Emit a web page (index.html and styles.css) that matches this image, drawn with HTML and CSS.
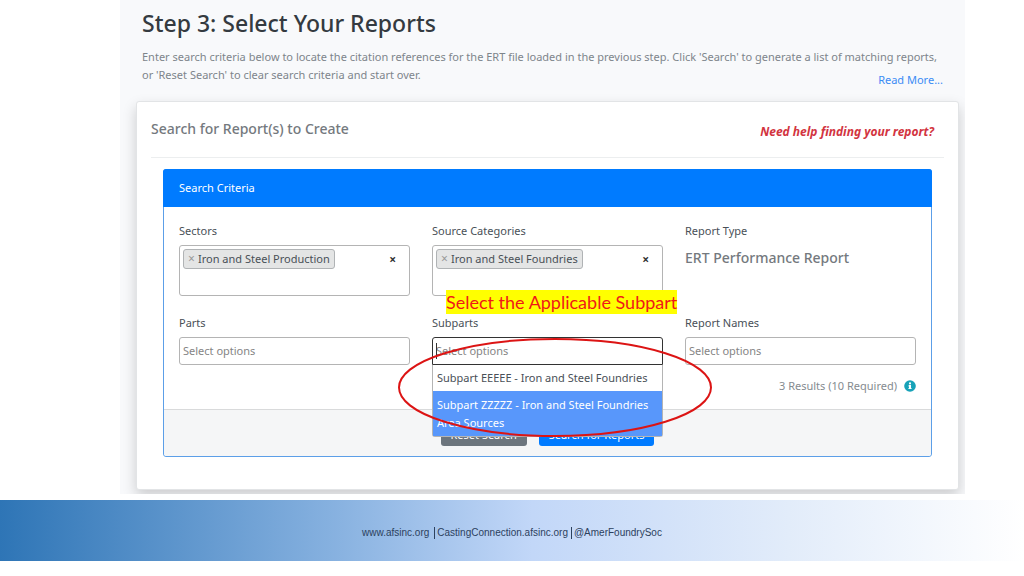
FILE: index.html
```html
<!DOCTYPE html>
<html lang="en">
<head>
<meta charset="utf-8">
<meta name="viewport" content="width=device-width, initial-scale=1">
<title>Step 3: Select Your Reports</title>
<link rel="stylesheet" href="styles.css">
</head>
<body>
<main class="screen">
  <header class="intro">
    <h1 class="title">Step 3: Select Your Reports</h1>
    <p class="lead">Enter search criteria below to locate the citation references for the ERT file loaded in the previous step. Click 'Search' to generate a list of matching reports, or 'Reset Search' to clear search criteria and start over.</p>
    <a class="more" href="#more">Read More...</a>
  </header>
  <section class="card">
    <div class="card-head">
      <h2 class="card-title">Search for Report(s) to Create</h2>
      <a class="help" href="#help">Need help finding your report?</a>
    </div>
    <form class="panel">
      <h3 class="panel-head">Search Criteria</h3>
      <div class="fields">
        <div class="field">
          <label class="label" for="sectors">Sectors</label>
          <div class="multi">
            <span class="tag"><button class="remove" type="button" aria-label="Remove Iron and Steel Production">×</button>Iron and Steel Production</span>
            <input class="entry" id="sectors" type="text">
            <button class="clear" type="button" aria-label="Clear sectors">×</button>
          </div>
        </div>
        <div class="field">
          <label class="label" for="categories">Source Categories</label>
          <div class="multi">
            <span class="tag"><button class="remove" type="button" aria-label="Remove Iron and Steel Foundries">×</button>Iron and Steel Foundries</span>
            <input class="entry" id="categories" type="text">
            <button class="clear" type="button" aria-label="Clear source categories">×</button>
          </div>
        </div>
        <div class="field">
          <span class="label">Report Type</span>
          <strong class="type">ERT Performance Report</strong>
        </div>
        <div class="field">
          <label class="label" for="parts">Parts</label>
          <input class="text" id="parts" type="text" placeholder="Select options">
        </div>
        <div class="field">
          <label class="label" for="subparts">Subparts</label>
          <div class="combo">
            <input class="text active" id="subparts" type="text" placeholder="Select options">
            <span class="caret"></span>
            <ul class="menu" role="listbox" aria-label="Subparts">
              <li class="option" role="option">Subpart EEEEE - Iron and Steel Foundries</li>
              <li class="option selected" role="option" aria-selected="true">Subpart ZZZZZ - Iron and Steel Foundries Area Sources</li>
            </ul>
            <svg class="ring" viewBox="0 0 314 99" preserveAspectRatio="none" aria-hidden="true"><ellipse cx="157" cy="49.5" rx="156" ry="48.5" fill="none" stroke="#dc1414" stroke-width="2"/></svg>
            <span class="callout">Select the Applicable Subpart</span>
          </div>
        </div>
        <div class="field">
          <label class="label" for="names">Report Names</label>
          <input class="text" id="names" type="text" placeholder="Select options">
        </div>
      </div>
      <p class="results">3 Results (10 Required)
        <svg class="info" viewBox="0 0 512 512" aria-hidden="true"><circle cx="256" cy="256" r="248" fill="#17a2b8"/><circle cx="256" cy="144" r="46" fill="#fff"/><path fill="#fff" d="M204 216h84q12 0 12 12v112h12q12 0 12 12v24q0 12-12 12H200q-12 0-12-12v-24q0-12 12-12h12v-64h-8q-12 0-12-12v-24q0-12 12-12z"/></svg>
      </p>
      <div class="actions">
        <button class="btn reset" type="reset">Reset Search</button>
        <button class="btn search" type="button">Search for Reports</button>
      </div>
    </form>
  </section>
</main>
<footer class="footer">
  <a href="#site">www.afsinc.org</a>
  <a class="divided wide" href="#connection">CastingConnection.afsinc.org</a>
  <a class="divided" href="#social">@AmerFoundrySoc</a>
</footer>
</body>
</html>
```
FILE: styles.css
```css
* { box-sizing: border-box; }
body {
  margin: 0;
  background: #fff;
  color: #495057;
  font-family: "Noto Sans", "Open Sans", sans-serif;
  font-size: 11px;
  line-height: 18px;
}
h1, h2, h3, p, ul { margin: 0; padding: 0; }
a { text-decoration: none; }
button, input { font: inherit; }
.screen {
  margin: 0 59px 0 120px;
  padding: 8px 6px 4px 16px;
  overflow: hidden;
  background: #f8f9fb;
}
.intro {
  display: grid;
  grid-template-columns: 1fr auto;
  grid-template-rows: 30px 10px 23px 30px;
  padding: 0 11px 0 6px;
}
.title { grid-area: 1 / 1 / 2 / 3; color: #343a40; font-size: 23px; line-height: 30px; font-weight: 500; }
.lead { grid-area: 3 / 1 / 5 / 3; color: #7e858b; }
.more { grid-area: 4 / 2; padding-right: 5px; color: #3b8cf5; }
.card {
  padding: 0 14px 32px;
  border: 1px solid #e2e4e6;
  border-radius: 3px;
  background: #fff;
  box-shadow: 0 6px 14px rgba(0, 0, 0, .18);
}
.card-head {
  display: flex;
  justify-content: space-between;
  align-items: center;
  height: 56px;
  padding-right: 10px;
  border-bottom: 1px solid #eceeef;
}
.card-title { padding-bottom: 2px; color: #74797e; font-size: 14px; font-weight: 500; }
.help { padding-top: 4px; color: #d2343f; font-size: 12px; font-weight: 700; font-style: italic; }
.panel {
  margin: 11px 12px 0;
  border: 1px solid #5c9fe8;
  border-radius: 3px;
  background: #fff;
}
.panel-head {
  margin: -1px -1px 0;
  padding: 10px 16px;
  border-radius: 3px 3px 0 0;
  background: #007bff;
  color: #fff;
  font-size: 11px;
  font-weight: 400;
}
.fields {
  display: grid;
  grid-template-columns: repeat(3, 1fr);
  gap: 18px 22px;
  padding: 15px 15px 0;
}
.field { min-width: 0; }
.label { display: block; margin-bottom: 5px; }
.multi {
  display: flex;
  align-items: flex-start;
  height: 51px;
  padding: 3px 13px 0 3px;
  border: 1px solid #b4b4b4;
  border-radius: 3px;
}
.tag {
  flex: none;
  display: flex;
  height: 20px;
  padding: 0 4px;
  border: 1px solid #b0b3b5;
  border-radius: 3px;
  background: #e4e5e5;
}
.remove, .clear { padding: 0; border: 0; background: none; font-size: 12px; }
.remove { width: 10px; color: #999; text-align: left; }
.clear { color: #333; font-weight: 700; line-height: 22px; }
.entry { flex: 1; min-width: 0; border: 0; padding: 0; outline: 0; background: none; }
.type { display: block; padding-top: 4px; color: #74797e; font-size: 14px; font-weight: 500; }
.text {
  display: block;
  width: 100%;
  height: 28px;
  padding: 0 4px 1px 3px;
  border: 1px solid #b4b4b4;
  border-radius: 3px;
  background: #fff;
  color: #495057;
}
.text::placeholder { color: #858585; opacity: 1; }
.active { border-color: #333; border-radius: 3px 3px 0 0; }
.combo { position: relative; }
.caret { position: absolute; left: 4px; top: 6px; width: 1px; height: 16px; background: #333; }
.menu {
  position: absolute;
  z-index: 2;
  top: 100%;
  left: 0;
  right: 0;
  border: 1px solid #b4b4b4;
  border-top: 0;
  border-radius: 0 0 3px 3px;
  background: #fff;
  list-style: none;
}
.option { padding: 4px; white-space: nowrap; }
.selected { padding-top: 5px; white-space: normal; background: #5897fb; color: #fff; }
.ring { position: absolute; z-index: 3; top: 1px; left: -34px; width: 314px; height: 99px; pointer-events: none; }
.callout {
  position: absolute;
  z-index: 3;
  left: 14px;
  bottom: 51px;
  background: #ff0;
  color: #f01818;
  font-family: Lato, sans-serif;
  font-size: 18px;
  line-height: 24px;
  white-space: nowrap;
}
.results {
  display: flex;
  justify-content: flex-end;
  align-items: center;
  gap: 7px;
  padding: 12px 15px 14px;
  color: #858b90;
}
.info { width: 12px; height: 12px; }
.actions {
  display: flex;
  justify-content: center;
  gap: 12px;
  padding: 9px 10px 10px;
  border-top: 1px solid #d9dadb;
  border-radius: 0 0 3px 3px;
  background: #f5f6f7;
}
.btn {
  height: 27px;
  padding: 4px 10px 0;
  border: 0;
  border-radius: 3px;
  color: #fff;
}
.reset { background: #6c757d; }
.search { background: #007bff; }
.footer {
  display: flex;
  justify-content: center;
  align-items: center;
  height: 61px;
  margin-top: 6px;
  padding-top: 4px;
  background: linear-gradient(90deg, #2e75b6 0%, #85b0df 32%, #c2d7f8 52%, #e2ecfa 77%, #fff 100%);
  font-family: "Liberation Sans", Arial, sans-serif;
  font-size: 10px;
  line-height: 12px;
}
.footer a { color: #2c415e; }
.footer .divided { margin-left: 3px; padding-left: 2px; border-left: 1px solid #2c415e; }
.footer .wide { margin-left: 5px; }
```
